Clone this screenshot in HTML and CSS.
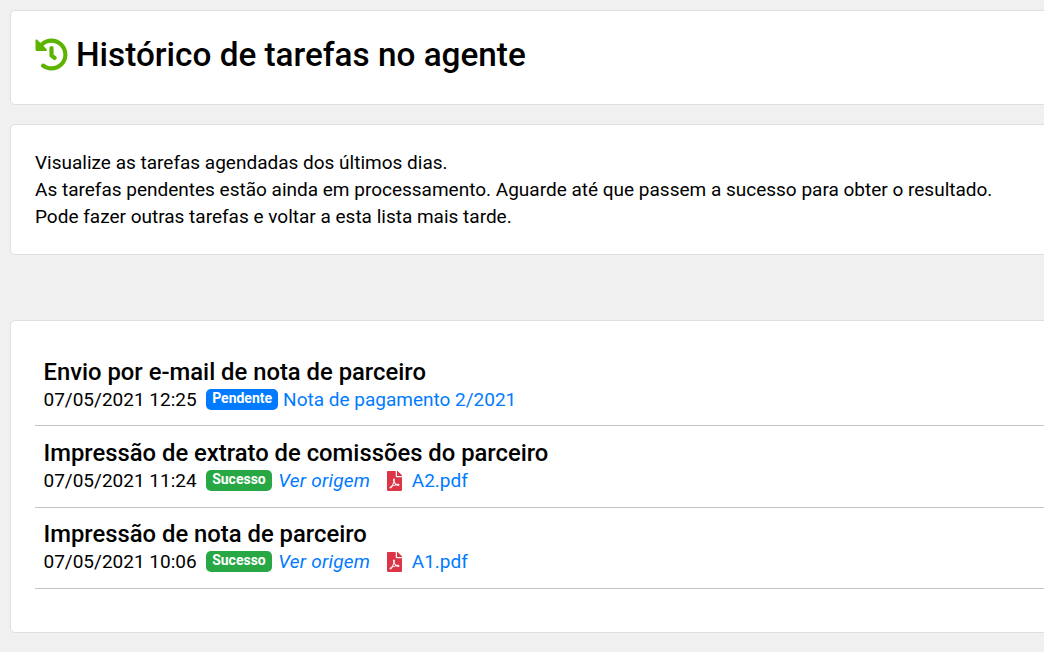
FILE: index.html
```html
<!DOCTYPE html>
<html lang="pt">
  <head>
    <meta charset="UTF-8" />
    <meta name="viewport" content="width=device-width, initial-scale=1.0" />
    <title>Histórico de tarefas no agente</title>
    <link rel="stylesheet" href="styles.css">
  </head>
  <body>
    <div class="page">
      <div class="card card-title">
        <h1>
          <svg class="icon-history" viewBox="0 0 512 512"><path d="M504 255.531c.253 136.64-111.18 248.372-247.82 248.468-59.015.042-113.223-20.53-155.822-54.911-11.077-8.94-11.905-25.541-1.839-35.607l11.267-11.267c8.609-8.609 22.353-9.551 31.891-1.984C173.062 425.135 212.781 440 256 440c101.705 0 184-82.311 184-184 0-101.705-82.311-184-184-184-48.814 0-93.149 18.969-126.068 49.932l50.754 50.754c10.08 10.08 2.941 27.314-11.313 27.314H24c-8.837 0-16-7.163-16-16V38.627c0-14.254 17.234-21.393 27.314-11.314l49.372 49.372C129.209 34.136 189.552 8 256 8c136.81 0 247.747 110.78 248 247.531zm-180.912 78.784l9.823-12.63c8.138-10.463 6.253-25.542-4.21-33.679L288 256.349V152c0-13.255-10.745-24-24-24h-16c-13.255 0-24 10.745-24 24v135.651l65.409 50.874c10.463 8.137 25.541 6.253 33.679-4.21z"/></svg>
          Histórico de tarefas no agente
        </h1>
      </div>

      <div class="card card-intro">
        <p>Visualize as tarefas agendadas dos últimos dias.</p>
        <p>As tarefas pendentes estão ainda em processamento. Aguarde até que passem a sucesso para obter o resultado.</p>
        <p>Pode fazer outras tarefas e voltar a esta lista mais tarde.</p>
      </div>

      <div class="card card-list">
        <div class="task">
          <h2>Envio por e-mail de nota de parceiro</h2>
          <div class="task-meta">
            <span>07/05/2021 12:25</span>
            <span class="badge badge-blue">Pendente</span>
            <a href="#">Nota de pagamento 2/2021</a>
          </div>
        </div>
        <div class="task">
          <h2>Impressão de extrato de comissões do parceiro</h2>
          <div class="task-meta">
            <span>07/05/2021 11:24</span>
            <span class="badge badge-green">Sucesso</span>
            <a href="#" class="origin">Ver origem</a>
            <a href="#" class="file">
              <svg class="icon-pdf" viewBox="0 0 384 512"><path d="M181.9 256.1c-5-16-4.9-46.9-2-46.9 8.4 0 7.6 36.9 2 46.9zm-1.7 47.2c-7.7 20.2-17.3 43.3-28.4 62.7 18.3-7 39-17.2 62.9-21.9-12.7-9.6-24.9-23.4-34.5-40.8zM86.1 428.1c0 .8 13.2-5.4 34.9-40.2-6.7 6.3-29.1 24.5-34.9 40.2zM248 160h136v328c0 13.3-10.7 24-24 24H24c-13.3 0-24-10.7-24-24V24C0 10.7 10.7 0 24 0h200v136c0 13.2 10.8 24 24 24zm-8 171.8c-20-12.2-33.3-29-42.7-53.8 4.5-18.5 11.6-46.6 6.2-64.2-4.7-29.4-42.4-26.5-47.8-6.8-5 18.3-.4 44.1 8.1 77-11.6 27.6-28.7 64.6-40.8 85.8-.1 0-.1.1-.2.1-27.1 13.9-73.6 44.5-54.5 68 5.6 6.9 16 10 21.5 10 17.9 0 35.7-18 61.1-61.8 25.8-8.5 54.1-19.1 79-23.2 21.7 11.8 47.1 19.5 64 19.5 29.2 0 31.2-32 19.7-43.4-13.9-13.6-54.3-9.7-73.6-7.2zM377 105L279 7c-4.5-4.5-10.6-7-17-7h-6v128h128v-6.1c0-6.3-2.5-12.4-7-16.9zm-74.1 255.3c4.1-2.7-2.5-11.9-42.8-9 37.1 15.8 42.8 9 42.8 9z"/></svg>
              A2.pdf
            </a>
          </div>
        </div>
        <div class="task">
          <h2>Impressão de nota de parceiro</h2>
          <div class="task-meta">
            <span>07/05/2021 10:06</span>
            <span class="badge badge-green">Sucesso</span>
            <a href="#" class="origin">Ver origem</a>
            <a href="#" class="file">
              <svg class="icon-pdf" viewBox="0 0 384 512"><path d="M181.9 256.1c-5-16-4.9-46.9-2-46.9 8.4 0 7.6 36.9 2 46.9zm-1.7 47.2c-7.7 20.2-17.3 43.3-28.4 62.7 18.3-7 39-17.2 62.9-21.9-12.7-9.6-24.9-23.4-34.5-40.8zM86.1 428.1c0 .8 13.2-5.4 34.9-40.2-6.7 6.3-29.1 24.5-34.9 40.2zM248 160h136v328c0 13.3-10.7 24-24 24H24c-13.3 0-24-10.7-24-24V24C0 10.7 10.7 0 24 0h200v136c0 13.2 10.8 24 24 24zm-8 171.8c-20-12.2-33.3-29-42.7-53.8 4.5-18.5 11.6-46.6 6.2-64.2-4.7-29.4-42.4-26.5-47.8-6.8-5 18.3-.4 44.1 8.1 77-11.6 27.6-28.7 64.6-40.8 85.8-.1 0-.1.1-.2.1-27.1 13.9-73.6 44.5-54.5 68 5.6 6.9 16 10 21.5 10 17.9 0 35.7-18 61.1-61.8 25.8-8.5 54.1-19.1 79-23.2 21.7 11.8 47.1 19.5 64 19.5 29.2 0 31.2-32 19.7-43.4-13.9-13.6-54.3-9.7-73.6-7.2zM377 105L279 7c-4.5-4.5-10.6-7-17-7h-6v128h128v-6.1c0-6.3-2.5-12.4-7-16.9zm-74.1 255.3c4.1-2.7-2.5-11.9-42.8-9 37.1 15.8 42.8 9 42.8 9z"/></svg>
              A1.pdf
            </a>
          </div>
        </div>
      </div>
    </div>
  </body>
</html>
```

FILE: styles.css
```css
* {
  margin: 0;
  padding: 0;
  box-sizing: border-box;
  font-family: "Roboto", sans-serif;
}
html,
body {
  height: 652px;
  overflow: hidden;
}
body {
  background: #f0f0f0;
  color: #000;
  font-size: 19px;
  line-height: 27px;
}
.page {
  width: 1100px;
  padding: 10px 0 0 10px;
}
.card {
  background: #fff;
  border: 1px solid #dfdfdf;
  border-radius: 5px;
}
.card-title {
  height: 95px;
  padding: 25px 24px 0;
  margin-bottom: 19px;
}
h1 {
  display: flex;
  align-items: center;
  font-size: 33.3px;
  font-weight: 500;
  line-height: 38px;
}
.icon-history {
  width: 33px;
  height: 33px;
  margin: -2px 8px 0 0;
  fill: #5cb300;
}
.card-intro {
  height: 131px;
  padding: 24px 24px 0;
  margin-bottom: 65px;
}
.card-list {
  height: 313px;
  padding: 24px 24px 0;
}
.task {
  height: 81px;
  padding: 14px 8.5px 0;
  border-bottom: 1px solid #c4c4c4;
}
.task:nth-child(2) {
  height: 82px;
}
.task:nth-child(3) {
  padding-top: 13px;
}
h2 {
  font-size: 23.8px;
  font-weight: 500;
  line-height: 27px;
}
.task-meta {
  display: flex;
  align-items: center;
  height: 27px;
}
.badge {
  height: 21px;
  margin: 0 5px 0 9px;
  padding: 0 6.5px;
  border-radius: 5px;
  color: #fff;
  font-size: 14px;
  font-weight: 700;
  line-height: 19px;
}
.badge-blue {
  background: #007bff;
  padding-right: 6px;
}
.badge-green {
  background: #28a745;
  padding-right: 6.5px;
}
a {
  color: #007bff;
  text-decoration: none;
}
.origin {
  margin-left: 1px;
  font-style: italic;
  letter-spacing: 0.25px;
}
.file {
  display: flex;
  align-items: center;
  margin-left: 17px;
}
.icon-pdf {
  width: 15px;
  height: 20px;
  margin-right: 9.5px;
  fill: #dc3545;
}
```
